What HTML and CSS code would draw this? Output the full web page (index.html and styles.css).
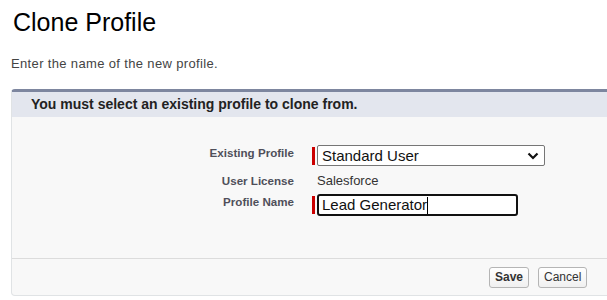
FILE: index.html
```html
<!DOCTYPE html>
<html lang="en">
<head>
	<meta charset="UTF-8">
	<title>Clone Profile</title>
	<link rel="stylesheet" href="styles.css">
</head>
<body>
	<div id="title">Clone Profile</div>
	<div id="intro">Enter the name of the new profile.</div>
	<div id="panel">
		<div id="panelhead">You must select an existing profile to clone from.</div>
		<div id="panelbody">
			<div class="label">Existing Profile</div>
			<div class="field">
				<div class="req"></div>
				<div id="select">
					<span>Standard User</span>
					<svg width="12" height="8" viewBox="0 0 12 8"><path d="M1.5 1.5 L6 6 L10.5 1.5" fill="none" stroke="#111" stroke-width="2.2"/></svg>
				</div>
			</div>
			<div class="label lic">User License</div>
			<div class="field value">Salesforce</div>
			<div class="label">Profile Name</div>
			<div class="field">
				<div class="req"></div>
				<div id="input">Lead Generator<span class="caret"></span></div>
			</div>
		</div>
		<div id="panelfoot">
			<div class="btn save">Save</div>
			<div class="btn">Cancel</div>
		</div>
	</div>
</body>
</html>
```

FILE: styles.css
```css
*{
	margin: 0;
	padding: 0;
	box-sizing: border-box;
	font-family: "Liberation Sans", Arial, sans-serif;
}
body{
	width: 607px;
	height: 300px;
	overflow: hidden;
	background-color: #fff;
}
#title{
	margin-left: 13px;
	padding-top: 7px;
	font-size: 25px;
	line-height: 30px;
	color: #000;
}
#intro{
	margin-left: 11px;
	margin-top: 19px;
	font-size: 13px;
	letter-spacing: 0.35px;
	line-height: 16px;
	color: #444;
}
#panel{
	margin-left: 11px;
	margin-top: 17px;
	width: 620px;
	border: 1px solid #e0e3e5;
	border-top: 3px solid #7d869f;
	border-radius: 4px 0 0 4px;
	background-color: #f8f8f8;
}
#panelhead{
	background-color: #e3e6ee;
	height: 25px;
	padding-left: 19px;
	font-size: 14px;
	font-weight: bold;
	line-height: 25px;
	color: #222;
}
#panelbody{
	display: grid;
	grid-template-columns: 282px 1fr;
	align-content: start;
	column-gap: 18px;
	padding-top: 28px;
	height: 141px;
}
.label{
	text-align: right;
	font-size: 11.6px;
	font-weight: bold;
	color: #4f4f5a;
	line-height: 15px;
}
.lic{
	padding-top: 7px;
}
.field{
	display: flex;
	align-items: center;
}
.value{
	font-size: 13px;
	color: #333;
	padding-left: 5px;
	padding-top: 7px;
	padding-bottom: 6px;
	align-items: flex-start;
	line-height: 15px;
}
.req{
	width: 3px;
	height: 18px;
	background-color: #c00;
	margin-right: 2px;
}
#select{
	width: 228px;
	height: 21px;
	border: 1px solid #767676;
	border-radius: 2px;
	background-color: #fff;
	display: flex;
	align-items: center;
	justify-content: space-between;
	padding-left: 4px;
	padding-right: 5px;
	font-size: 15px;
	color: #111;
}
#input{
	width: 201px;
	height: 22px;
	border: 2px solid #111;
	border-radius: 3px;
	background-color: #fff;
	padding-left: 3px;
	font-size: 15px;
	line-height: 18px;
	color: #111;
	display: flex;
	align-items: center;
}
.caret{
	width: 1px;
	height: 17px;
	background-color: #000;
}
#panelfoot{
	border-top: 1px solid #dcdcdc;
	height: 37px;
	display: flex;
	align-items: center;
	padding-left: 477px;
	gap: 9px;
}
.btn{
	height: 21px;
	padding: 0 5px;
	border: 1px solid #b5b5b5;
	border-radius: 3px;
	background: linear-gradient(#fff, #f0f0f0);
	font-size: 12px;
	line-height: 19px;
	color: #333;
}
.save{
	font-weight: bold;
}
```
